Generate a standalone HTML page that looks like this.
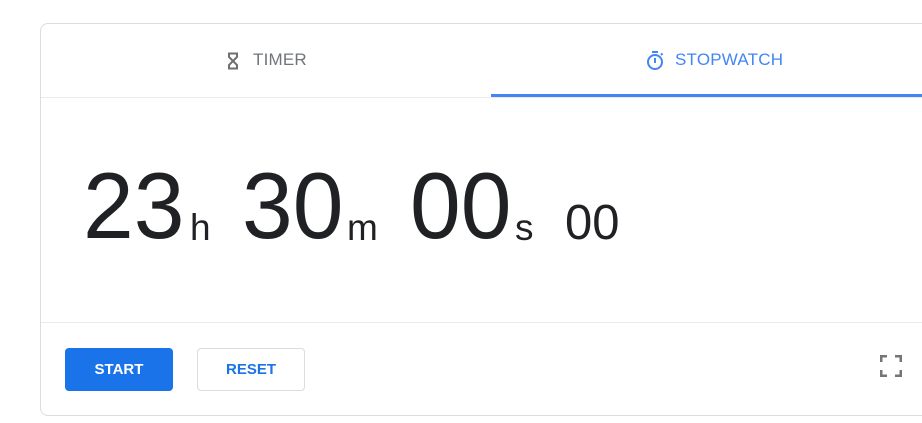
<!DOCTYPE html>
<html><head><style>
body{margin:0;width:922px;height:423px;background:#fff;font-family:"Liberation Sans",Arial,sans-serif;position:relative;overflow:hidden}
.card{position:absolute;left:40px;top:23px;width:900px;height:393px;border:1px solid #dadce0;border-radius:8px;box-sizing:border-box}
.hdiv{position:absolute;left:41px;top:97px;width:881px;height:1px;background:#ebebeb}
.fdiv{position:absolute;left:41px;top:322px;width:881px;height:1px;background:#ebebeb}
.ul{position:absolute;left:491px;top:94px;width:431px;height:3px;background:#4285f4}
.tab{position:absolute;top:50px;font-size:17px;letter-spacing:0.2px}
.t{position:absolute;color:#202124;line-height:1}
.big{font-size:94px;top:159px;transform:scaleX(0.97);transform-origin:left}
.u{font-size:37px;top:209px}
.btn{position:absolute;top:348px;height:43px;box-sizing:border-box;border-radius:4px;font-weight:bold;font-size:15px;display:flex;align-items:center;justify-content:center}
</style></head><body>
<div class="card"></div>
<div class="hdiv"></div><div class="ul"></div><div class="fdiv"></div>
<svg style="position:absolute;left:226px;top:52px" width="14" height="18" viewBox="0 0 14 18"><path d="M2 1.5H12M2 16.5H12M3 1.5V5L7 9L3 13V16.5M11 1.5V5L7 9L11 13V16.5" fill="none" stroke="#6f6f6f" stroke-width="2"/></svg>
<div class="tab" style="left:253px;color:#70757a">TIMER</div>
<svg style="position:absolute;left:645px;top:50px" width="20" height="21" viewBox="0 0 20 21"><path d="M7 2H13" stroke="#4285f4" stroke-width="2"/><circle cx="10" cy="12" r="7" fill="none" stroke="#4285f4" stroke-width="2"/><path d="M10 8V13" stroke="#4285f4" stroke-width="2"/><path d="M16 5L17.5 3.5" stroke="#4285f4" stroke-width="2"/></svg>
<div class="tab" style="left:675px;color:#4285f4">STOPWATCH</div>
<div class="t big" style="left:83px">23</div>
<div class="t u" style="left:190px">h</div>
<div class="t big" style="left:242px">30</div>
<div class="t u" style="left:347px">m</div>
<div class="t big" style="left:410px">00</div>
<div class="t u" style="left:515px">s</div>
<div class="t" style="left:565px;top:199px;font-size:49px">00</div>
<div class="btn" style="left:65px;width:108px;background:#1a73e8;color:#fff">START</div>
<div class="btn" style="left:197px;width:108px;border:1px solid #dadce0;color:#1a73e8">RESET</div>
<svg style="position:absolute;left:880px;top:355px" width="22" height="22" viewBox="0 0 22 22"><path d="M1 7V1H7M15 1H21V7M21 15V21H15M7 21H1V15" fill="none" stroke="#757575" stroke-width="3"/></svg>
</body></html>
